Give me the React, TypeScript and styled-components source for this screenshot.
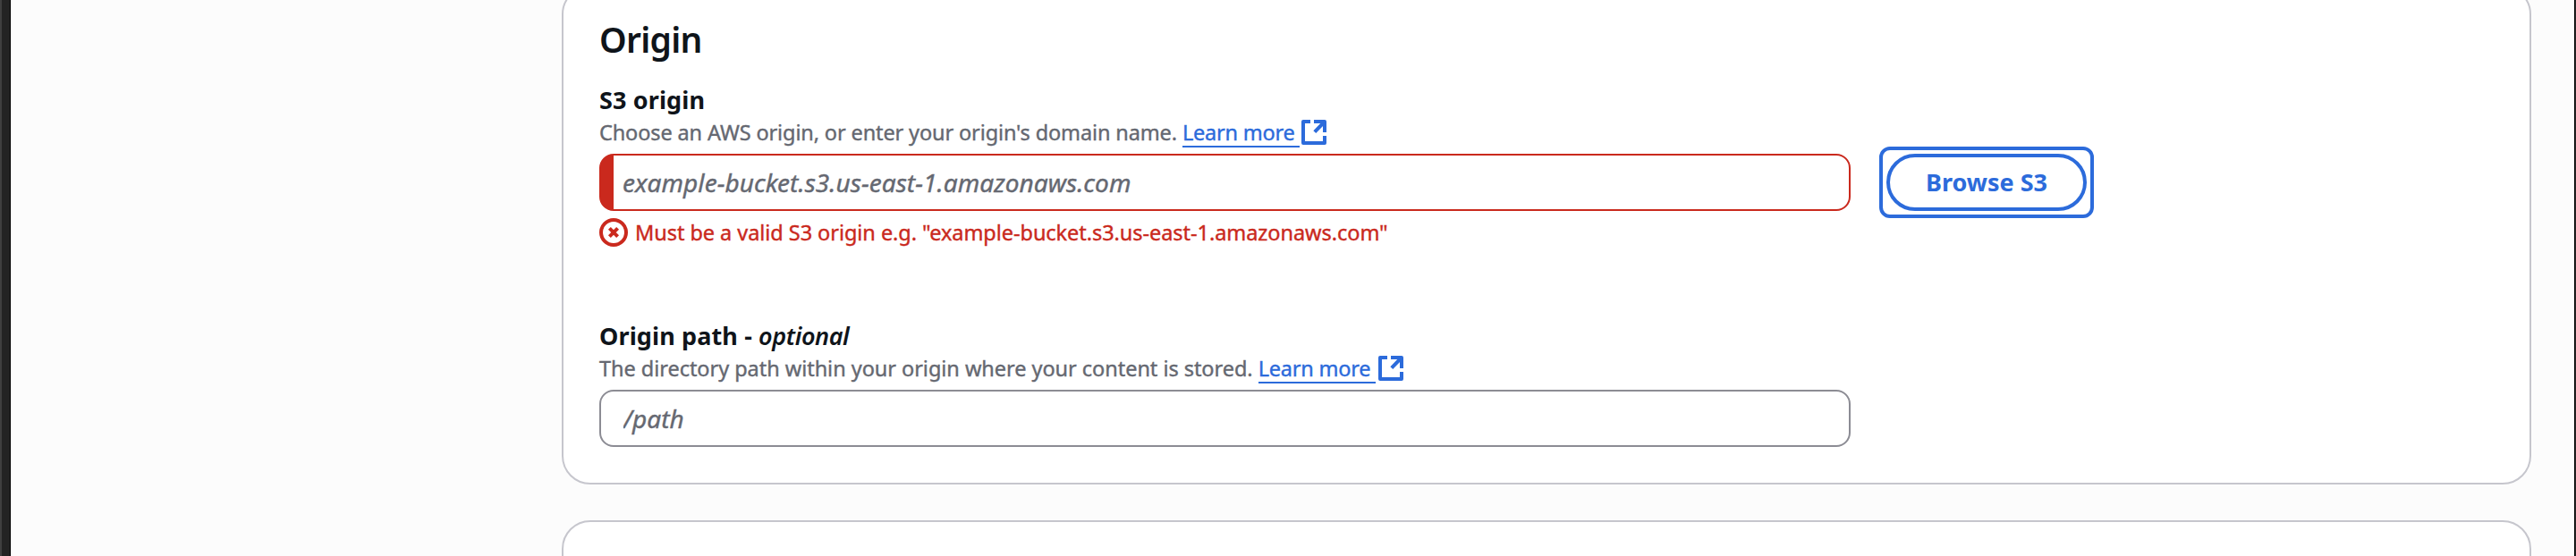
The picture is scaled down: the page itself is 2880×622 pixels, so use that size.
import React from "react";
import styled, { createGlobalStyle } from "styled-components";

const blue = "#2c6bdb";
const red = "#ca291d";

const GlobalStyle = createGlobalStyle`
  * { box-sizing: border-box; }
  body { margin: 0; font-family: "Noto Sans", sans-serif; color: #0f141a; background: #fcfcfc; }
`;

const Page = styled.div`
  display: flex;
  height: 622px;
  overflow: hidden;
`;

const DesktopEdge = styled.div`
  width: 12px;
  flex: none;
  background: #232323;
  border-left: 2px solid #3f3f3f;
  border-right: 1px solid #000;
`;

const WindowEdge = styled.div`
  width: 2px;
  flex: none;
  background: #2a2a2a;
  border-left: 1px solid #000;
`;

const Main = styled.main`
  flex: 1;
  display: flex;
  flex-direction: column;
  gap: 40px;
  margin-top: -16px;
  padding: 0 48px 0 616px;
`;

const Card = styled.section`
  flex: none;
  padding: 34px 40px 40px;
  background: #fff;
  border: 2px solid #c6c6cd;
  border-radius: 32px;
`;

const NextCard = styled(Card)`
  height: 200px;
`;

const Title = styled.h2`
  margin: 0 0 24px;
  font-size: 39px;
  line-height: 48px;
  font-weight: 650;
  letter-spacing: -0.7px;
`;

const Field = styled.div`
  width: 1399px;

  & + & {
    margin-top: 80px;
  }
`;

const Label = styled.label`
  display: block;
  font-size: 27px;
  line-height: 40px;
  font-weight: 700;
  letter-spacing: 0.12px;
  white-space: pre;
`;

const Optional = styled.i`
  font-weight: 650;
  letter-spacing: -0.4px;
`;

const Hint = styled.div`
  display: flex;
  align-items: flex-start;
  height: 32px;
  margin-bottom: 8px;
  font-size: 23.5px;
  line-height: 32px;
  color: #656871;
  white-space: nowrap;
  -webkit-text-stroke: 0.4px currentColor;
`;

const HintText = styled.span<{ $tracking: number }>`
  letter-spacing: ${(p) => p.$tracking}px;
`;

const Link = styled.a<{ $gap: number }>`
  display: flex;
  gap: ${(p) => p.$gap}px;
  margin-left: 6px;
  color: ${blue};
`;

const LinkText = styled.span`
  width: 131px;
  height: 33px;
  letter-spacing: -0.2px;
  border-bottom: 2px solid ${blue};
`;

const ExternalSvg = styled.svg`
  width: 28px;
  height: 28px;
  margin-top: 2px;
  flex: none;
`;

const InputRow = styled.div`
  display: flex;
  align-items: center;
  gap: 40px;
`;

const Input = styled.input<{ $invalid?: boolean }>`
  display: block;
  flex: none;
  width: 1399px;
  height: 64px;
  margin: 0;
  padding: 0 24px;
  padding-left: ${(p) => (p.$invalid ? 10 : 25)}px;
  font: 28px "Noto Sans", sans-serif;
  background: #fff;
  border: 2px solid ${(p) => (p.$invalid ? red : "#8c8c94")};
  border-left-width: ${(p) => (p.$invalid ? 16 : 2)}px;
  border-radius: 16px;
  outline: none;

  &::placeholder {
    color: #656871;
    font-style: italic;
    letter-spacing: 0.05px;
    opacity: 1;
    -webkit-text-stroke: 0.4px #656871;
  }
`;

const Button = styled.button`
  flex: none;
  width: 224px;
  height: 64px;
  padding: 0 0 2px;
  color: ${blue};
  font: 700 27px "Noto Sans", sans-serif;
  background: #fff;
  border: 4px solid ${blue};
  border-radius: 32px;
`;

const FocusRing = styled.span`
  display: flex;
  flex: none;
  margin: -8px;
  padding: 4px;
  border: 4px solid ${blue};
  border-radius: 12px;
`;

const ErrorLine = styled.div`
  display: flex;
  gap: 8px;
  margin-top: 8px;
  color: ${red};
  font-size: 23.5px;
  line-height: 32px;
  letter-spacing: -0.05px;
  white-space: nowrap;
  -webkit-text-stroke: 0.4px currentColor;
`;

function ExternalIcon() {
  return (
    <ExternalSvg viewBox="0 0 28 28" fill="none" stroke="currentColor" strokeWidth="4" strokeLinejoin="round">
      <path d="M10 2H2V26H26V18" />
      <path d="M14 2H26V14M26 2L14.8 13.6" />
    </ExternalSvg>
  );
}

function ErrorIcon() {
  return (
    <svg width="32" height="32" viewBox="0 0 32 32" fill="none" stroke="currentColor" strokeWidth="4">
      <circle cx="16" cy="16" r="14" />
      <path d="M11.4 11.4L20.6 20.6M20.6 11.4L11.4 20.6" />
    </svg>
  );
}

function LearnMore({ gap }: { gap: number }) {
  return (
    <Link $gap={gap}>
      <LinkText>Learn more</LinkText>
      <ExternalIcon />
    </Link>
  );
}

export default function App() {
  return (
    <Page>
      <GlobalStyle />
      <DesktopEdge />
      <Main>
        <Card>
          <Title>Origin</Title>
          <Field>
            <Label>S3 origin</Label>
            <Hint>
              <HintText $tracking={-0.125}>Choose an AWS origin, or enter your origin's domain name.</HintText>
              <LearnMore gap={2} />
            </Hint>
            <InputRow>
              <Input $invalid placeholder="example-bucket.s3.us-east-1.amazonaws.com" />
              <FocusRing>
                <Button>Browse S3</Button>
              </FocusRing>
            </InputRow>
            <ErrorLine>
              <ErrorIcon />
              <span>Must be a valid S3 origin e.g. "example-bucket.s3.us-east-1.amazonaws.com"</span>
            </ErrorLine>
          </Field>
          <Field>
            <Label>
              Origin path - <Optional>optional</Optional>
            </Label>
            <Hint>
              <HintText $tracking={-0.04}>The directory path within your origin where your content is stored.</HintText>
              <LearnMore gap={3} />
            </Hint>
            <Input placeholder="/path" />
          </Field>
        </Card>
        <NextCard />
      </Main>
      <WindowEdge />
    </Page>
  );
}
